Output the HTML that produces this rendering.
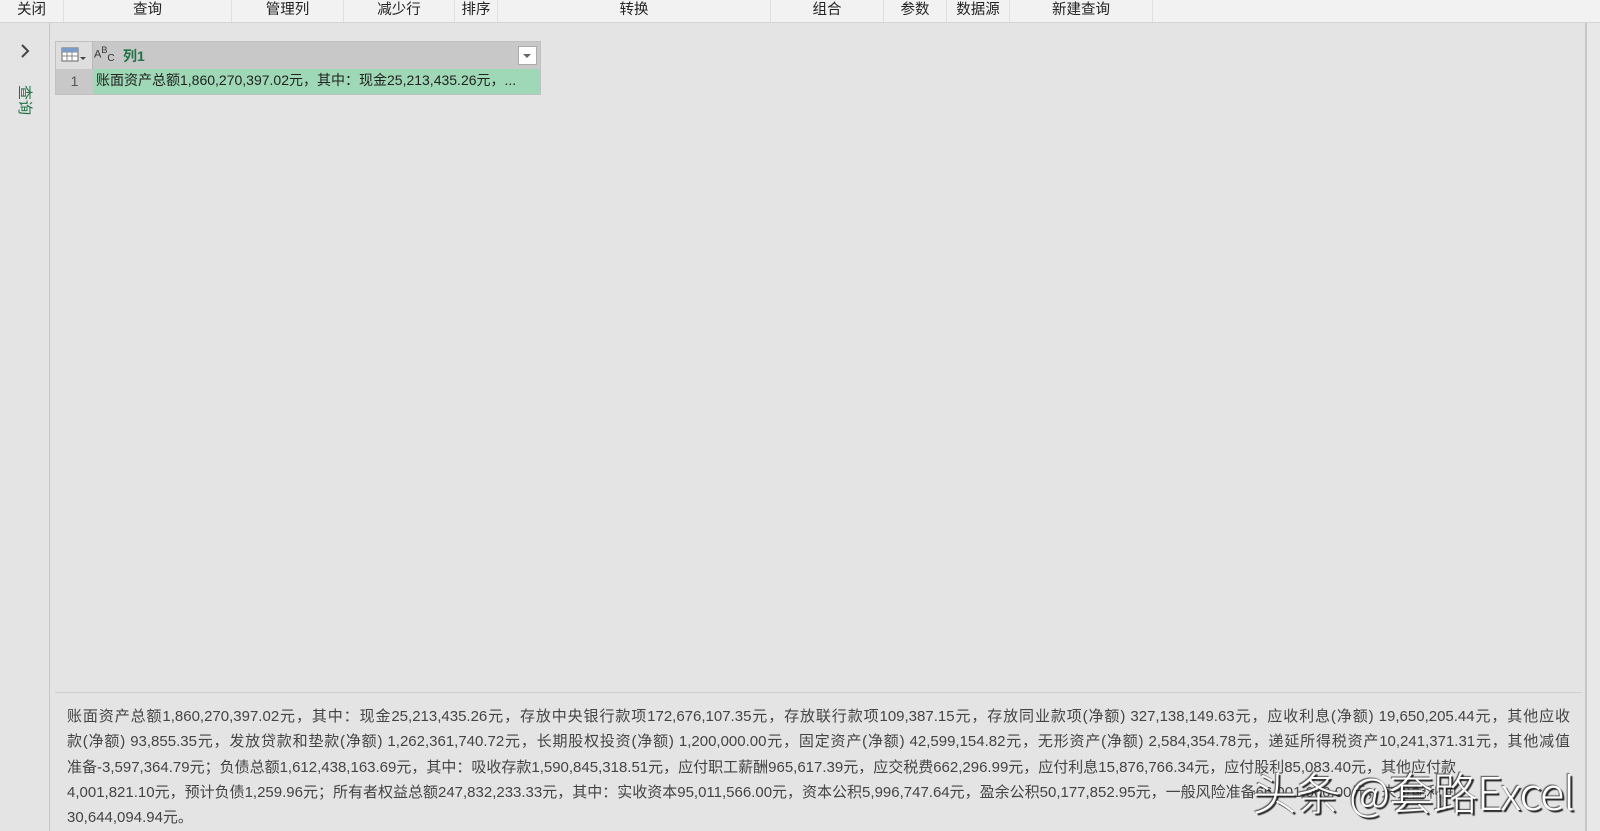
<!DOCTYPE html>
<html><head><meta charset="utf-8">
<style>
*{margin:0;padding:0;box-sizing:border-box}
body{width:1600px;height:831px;overflow:hidden;background:#e4e4e4;font-family:"Liberation Sans","Noto Sans CJK SC",sans-serif;color:#333;position:relative}
.top{position:absolute;left:0;top:0;width:1600px;height:23px;background:#f2f2f2;border-bottom:1px solid #d4d4d4;font-size:14.5px;color:#222}
.top div{position:absolute;top:0;height:22px;line-height:20px;text-align:center;border-right:1px solid #e0e0e0}
.left{position:absolute;left:0;top:23px;width:50px;height:808px;background:#e4e4e4;border-right:1px solid #c8c8c8}
.vtext{position:absolute;left:15px;top:62px;font-size:15px;color:#217346;writing-mode:vertical-rl;text-orientation:sideways;letter-spacing:0px}
.tbl{position:absolute;left:55px;top:41px;width:486px;height:54px;border:1px solid #c0c0c0}
.hdr{position:absolute;left:0;top:0;width:484px;height:27px;background:#c8c8c8}
.rn{position:absolute;left:0;top:0;width:37px;height:27px;background:#dedede;border-right:1px solid #bbb}
.row{position:absolute;left:0;top:27px;width:484px;height:25px;background:#9fd8b7}
.rnum{position:absolute;left:0;top:0;width:37px;height:25px;background:#c8c8c8;text-align:center;font-size:14px;line-height:25px;color:#555}
.cell{position:absolute;left:40px;top:0;font-size:14px;line-height:23px;color:#222;white-space:nowrap}
.bottom{position:absolute;left:55px;top:692px;width:1527px;border-top:1px solid #cfcfcf}
.btext{position:absolute;left:12px;top:11px;width:1503px;font-size:15px;line-height:25.3px;color:#444}
.btext div{white-space:nowrap}
.btext .j{text-align:justify;text-align-last:justify;white-space:normal;height:25.3px;overflow:hidden}
.rline{position:absolute;left:1585px;top:23px;width:2px;height:808px;background:#c6c6c6}
.rstrip{position:absolute;left:1587px;top:23px;width:13px;height:808px;background:#e8e8e8}
.wm{position:absolute;left:1252px;top:758px;font-size:45px;color:#fff;text-shadow:2px 2px 1px #222,-1px -1px 1px #555;white-space:nowrap;letter-spacing:-1px;font-family:"Noto Sans CJK SC",sans-serif;font-weight:300}
</style></head><body>
<div class="top">
<div style="left:0;width:64px">关闭</div>
<div style="left:64px;width:168px">查询</div>
<div style="left:232px;width:112px">管理列</div>
<div style="left:344px;width:111px">减少行</div>
<div style="left:455px;width:43px">排序</div>
<div style="left:498px;width:273px">转换</div>
<div style="left:771px;width:113px">组合</div>
<div style="left:884px;width:63px">参数</div>
<div style="left:947px;width:63px">数据源</div>
<div style="left:1010px;width:143px">新建查询</div>
</div>
<div class="left">
<svg style="position:absolute;left:19px;top:20px" width="12" height="16"><path d="M3 2 L9 8 L3 14" fill="none" stroke="#444" stroke-width="2"/></svg>
<div class="vtext">查询</div>
</div>
<div class="rline"></div><div class="rstrip"></div>
<div class="tbl">
<div class="hdr">
<div class="rn"><svg style="position:absolute;left:5px;top:5px" width="26" height="16"><rect x="1" y="1" width="16" height="13" fill="#fff" stroke="#666"/><path d="M1 5H17M1 9H17M6 1V14M11 1V14" stroke="#888"/><rect x="1" y="1" width="16" height="4" fill="#7a9cc6"/><path d="M19 10L25 10L22 13Z" fill="#444"/></svg></div>
<div style="position:absolute;left:38px;top:3px;font-size:11px;color:#333">A<sup style="font-size:9px">B</sup><sub style="font-size:10px">C</sub></div>
<div style="position:absolute;left:67px;top:4px;font-size:14px;font-weight:bold;color:#217346">列1</div>
<div style="position:absolute;left:462px;top:4px;width:19px;height:19px;background:#fff;border:1px solid #aaa"><svg width="17" height="17"><path d="M4 7L12 7L8 11Z" fill="#666"/></svg></div>
</div>
<div class="row"><div class="rnum">1</div><div class="cell">账面资产总额1,860,270,397.02元，其中：现金25,213,435.26元，...</div></div>
</div>
<div class="bottom"><div class="btext">
<div class="j">账面资产总额1,860,270,397.02元，其中：现金25,213,435.26元，存放中央银行款项172,676,107.35元，存放联行款项109,387.15元，存放同业款项(净额) 327,138,149.63元，应收利息(净额) 19,650,205.44元，其他应收</div>
<div class="j">款(净额) 93,855.35元，发放贷款和垫款(净额) 1,262,361,740.72元，长期股权投资(净额) 1,200,000.00元，固定资产(净额) 42,599,154.82元，无形资产(净额) 2,584,354.78元，递延所得税资产10,241,371.31元，其他减值</div>
<div>准备-3,597,364.79元；负债总额1,612,438,163.69元，其中：吸收存款1,590,845,318.51元，应付职工薪酬965,617.39元，应交税费662,296.99元，应付利息15,876,766.34元，应付股利85,083.40元，其他应付款</div>
<div>4,001,821.10元，预计负债1,259.96元；所有者权益总额247,832,233.33元，其中：实收资本95,011,566.00元，资本公积5,996,747.64元，盈余公积50,177,852.95元，一般风险准备66,001,000.00元，未分配利润</div>
<div>30,644,094.94元。</div>
</div></div>
<div class="wm">头条 @套路Excel</div>
</body></html>
